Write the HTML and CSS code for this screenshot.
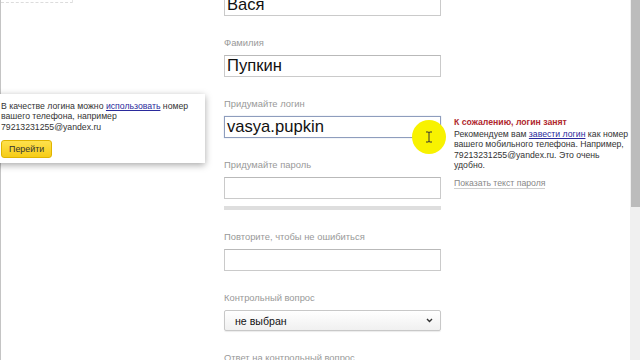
FILE: index.html
```html
<!DOCTYPE html>
<html lang="ru">
<head>
<meta charset="utf-8">
<title>Регистрация</title>
<link rel="stylesheet" href="styles.css">
</head>
<body>
<div class="page">
  <div class="left">
    <div class="dash"></div>
    <div class="popup">
      <p class="popup-text">В качестве логина можно <a href="#" class="link">использовать</a> номер вашего телефона, например 79213231255@yandex.ru</p>
      <button class="btn-yellow">Перейти</button>
    </div>
  </div>

  <div class="form">
    <div class="input">Вася</div>

    <div class="field-label">Фамилия</div>
    <div class="input">Пупкин</div>

    <div class="field-label">Придумайте логин</div>
    <div class="input input-focus">vasya.pupkin</div>

    <div class="field-label">Придумайте пароль</div>
    <div class="input"></div>
    <div class="strength"></div>

    <div class="field-label">Повторите, чтобы не ошибиться</div>
    <div class="input"></div>

    <div class="field-label">Контрольный вопрос</div>
    <div class="select">
      <span>не выбран</span>
      <svg class="chev" width="7" height="5" viewBox="0 0 7 5"><path d="M1 1 L3.5 3.5 L6 1" fill="none" stroke="#333" stroke-width="1.4"/></svg>
    </div>

    <div class="field-label">Ответ на контрольный вопрос</div>
  </div>

  <div class="aside">
    <div class="error-title">К сожалению, логин занят</div>
    <p class="hint">Рекомендуем вам <a href="#" class="link">завести логин</a> как номер вашего мобильного телефона. Например, 79213231255@yandex.ru. Это очень удобно.</p>
    <a href="#" class="show-pass">Показать текст пароля</a>
  </div>

  <div class="scrollbar"><div class="thumb"></div></div>
</div>

<div class="cursor-spot">
  <svg width="8" height="12" viewBox="0 0 8 12"><path d="M1 1 H3 Q4 1 4 2 V10 Q4 11 5 11 H7 M7 1 H5 Q4 1 4 2 M4 10 Q4 11 3 11 H1" fill="none" stroke="#333" stroke-width="1"/></svg>
</div>
</body>
</html>
```

FILE: styles.css
```css
* { box-sizing: border-box; }

html, body {
  margin: 0;
  padding: 0;
  background: #fff;
}

body {
  font-family: "Liberation Sans", Arial, sans-serif;
  color: #333;
  width: 640px;
  height: 360px;
  overflow: hidden;
  position: relative;
}

.page {
  display: flex;
  height: 360px;
  border-left: 1px solid #c4c4c4;
}

.left {
  width: 223px;
  flex: none;
  position: relative;
}

.dash {
  width: 72px;
  height: 3px;
  border-bottom: 1px dashed #dcdcdc;
  border-right: 1px dashed #e4e4e4;
}

.popup {
  position: absolute;
  left: -12px;
  top: 94px;
  width: 216px;
  height: 69px;
  background: #fff;
  padding: 7px 8px 0 12px;
  box-shadow: 0 2px 7px rgba(0, 0, 0, 0.35);
}

.popup-text {
  margin: 0;
  font-size: 8.7px;
  line-height: 10.4px;
  color: #333;
}

.link {
  color: #2a2a9c;
  text-decoration: underline;
}

.btn-yellow {
  display: block;
  margin-top: 8px;
  margin-left: 0;
  height: 18px;
  padding: 0 7px;
  font-family: "Liberation Sans", Arial, sans-serif;
  font-size: 8.9px;
  color: #333;
  background: linear-gradient(#ffe14d, #f6cc16);
  border: 1px solid #e0b400;
  border-radius: 3px;
}

.form {
  width: 217px;
  flex: none;
  margin-top: -6px;
}

.field-label {
  font-size: 9.4px;
  line-height: 13px;
  color: #999;
  margin-top: 20px;
  margin-bottom: 6px;
  white-space: nowrap;
}

.input {
  height: 22px;
  border: 1px solid #cacaca;
  border-top-color: #b9b9b9;
  font-size: 16.6px;
  line-height: 20px;
  padding: 0 2px;
  color: #111;
  background: #fff;
}

.input-focus {
  border-color: #8e9dbd;
  box-shadow: 0 0 1px rgba(120, 140, 190, 0.5);
}

.strength {
  height: 4px;
  margin-top: 7px;
  background: #dedede;
}

.select {
  height: 21px;
  border: 1px solid #c8c8c8;
  border-radius: 2px;
  background: linear-gradient(#ffffff, #f0f0f0);
  box-shadow: 0 1px 1px rgba(0, 0, 0, 0.08);
  display: flex;
  align-items: center;
  justify-content: space-between;
  padding: 0 7px 0 10px;
  font-size: 10.6px;
  color: #111;
}

.chev { display: block; }

.aside {
  width: 176px;
  flex: none;
  margin-left: 13px;
  padding-top: 117px;
}

.error-title {
  font-size: 8.7px;
  line-height: 11px;
  font-weight: bold;
  color: #b0282e;
}

.hint {
  margin: 1px 0 0;
  font-size: 8.7px;
  line-height: 10.4px;
  color: #333;
}

.show-pass {
  display: inline-block;
  margin-top: 7px;
  font-size: 8.7px;
  line-height: 10px;
  color: #888;
  text-decoration: none;
  border-bottom: 1px solid #cfcfcf;
}

.scrollbar {
  margin-left: auto;
  width: 13px;
  flex: none;
  background: #f0f0f0;
  padding: 0 3px 0 1px;
}

.thumb {
  height: 207px;
  background: #bcbcbc;
}

.cursor-spot {
  position: absolute;
  left: 412px;
  top: 120px;
  width: 34px;
  height: 34px;
  border-radius: 50%;
  background: #f8f200;
  display: flex;
  align-items: center;
  justify-content: center;
}
```
